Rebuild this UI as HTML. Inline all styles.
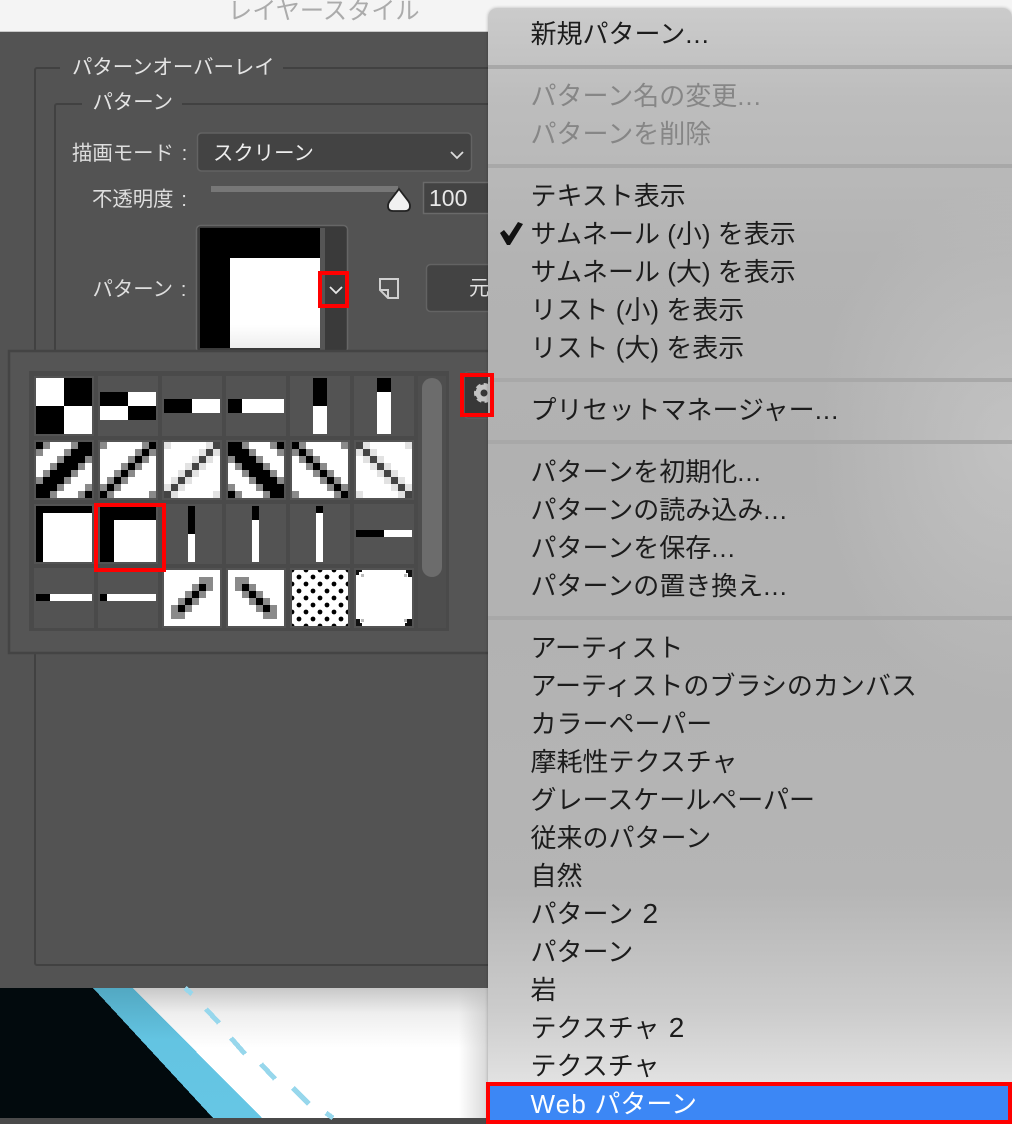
<!DOCTYPE html>
<html lang="ja"><head><meta charset="utf-8"><title>レイヤースタイル</title>
<style>
html,body{margin:0;padding:0;background:#535353}
body{width:1012px;height:1124px;position:relative;overflow:hidden;font-family:"Liberation Sans","Noto Sans CJK JP",sans-serif}
svg{position:absolute;left:0;top:0}
.t{position:absolute;white-space:nowrap;line-height:38px;height:38px;color:#dedede;font-size:20.4px}
.m{font-size:26px;color:#1c1c1c;left:530.5px;margin-top:1px}
.d{color:#868686}
.e{letter-spacing:1px}
.n{font-size:28px;margin-left:2px}
#menu{position:absolute;left:488px;top:8px;width:524px;height:1116px;border-radius:9px 9px 0 0;
background:radial-gradient(ellipse 200px 260px at 100% 39%,rgba(205,205,205,.6),rgba(205,205,205,0)),linear-gradient(180deg,#cbcbcb 0,#bdbdbd 90px,#b3b3b3 250px,#b1b1b1 450px,#b3b3b3 700px,#b5b5b5 880px,#cbcbcb 1000px,#e2e2e2 1075px);box-shadow:0 0 3px rgba(0,0,0,.25)}
.s{position:absolute;left:488px;width:524px;height:4px;background:#a8a8a8}
</style></head><body>
<div style="position:absolute;left:0;top:0;width:1012px;height:32px;background:#f4f4f4;border-bottom:1px solid #c8c8c8;box-sizing:border-box"></div>
<div class="t" style="left:228px;top:-7px;font-size:24.200px;color:#ababab">レイヤースタイル</div>
<div style="position:absolute;left:0;top:988px;width:488px;height:130px;background:linear-gradient(90deg,rgba(255,255,255,0) 94%,rgba(190,190,190,.6) 100%),linear-gradient(180deg,#c8c8c8 0,#eeeeee 25px,#fff 60px)"></div>
<div style="position:absolute;left:0;top:1118px;width:488px;height:6px;background:#4a4a4a"></div>
<svg width="1012" height="1124" viewBox="0 0 1012 1124">
<defs>
<linearGradient id="bl" x1="0" y1="988" x2="0" y2="1118" gradientUnits="userSpaceOnUse"><stop offset="0" stop-color="#52a8c2"/><stop offset=".4" stop-color="#63c4e2"/><stop offset="1" stop-color="#66c6e4"/></linearGradient>
<linearGradient id="sw" x1="0" y1="325" x2="0" y2="348" gradientUnits="userSpaceOnUse"><stop offset="0" stop-color="#fff"/><stop offset="1" stop-color="#eeeeee"/></linearGradient>
<path id="ka" d="M0 0h1v1h-1zM6 0h2v1h-2zM5 1h3v1h-3zM4 2h3v1h-3zM3 3h3v1h-3zM2 4h3v1h-3zM1 5h3v1h-3zM0 6h3v1h-3zM0 7h2v1h-2zM7 7h1v1h-1z"/>
<path id="ga" d="M1 0h1v1h-1zM5 0h1v1h-1zM0 1h1v1h-1zM4 1h1v1h-1zM3 2h1v1h-1zM7 2h1v1h-1zM2 3h1v1h-1zM6 3h1v1h-1zM1 4h1v1h-1zM5 4h1v1h-1zM0 5h1v1h-1zM4 5h1v1h-1zM3 6h1v1h-1zM7 6h1v1h-1zM2 7h1v1h-1zM6 7h1v1h-1z"/>
<path id="kb" d="M7 0h1v1h-1zM6 1h1v1h-1zM5 2h1v1h-1zM4 3h1v1h-1zM3 4h1v1h-1zM2 5h1v1h-1zM1 6h1v1h-1zM0 7h1v1h-1z"/>
<path id="gb" d="M0 0h1v1h-1zM6 0h1v1h-1zM5 1h1v1h-1zM7 1h1v1h-1zM4 2h1v1h-1zM6 2h1v1h-1zM3 3h1v1h-1zM5 3h1v1h-1zM2 4h1v1h-1zM4 4h1v1h-1zM1 5h1v1h-1zM3 5h1v1h-1zM0 6h1v1h-1zM2 6h1v1h-1zM1 7h1v1h-1zM7 7h1v1h-1z"/>
<path id="kc" d="M5 2h1v1h-1zM4 3h1v1h-1zM3 4h1v1h-1zM2 5h1v1h-1z"/>
<path id="gc" d="M5 1h2v1h-2zM4 2h1v1h-1zM6 2h1v1h-1zM3 3h1v1h-1zM5 3h1v1h-1zM2 4h1v1h-1zM4 4h1v1h-1zM1 5h1v1h-1zM3 5h1v1h-1zM1 6h2v1h-2z"/>
<pattern id="dots" x="292" y="570" width="14" height="14" patternUnits="userSpaceOnUse">
<rect width="14" height="14" fill="#fff"/><circle cx="0" cy="0" r="2.400"/><circle cx="14" cy="0" r="2.400"/><circle cx="0" cy="14" r="2.400"/><circle cx="14" cy="14" r="2.400"/><circle cx="7" cy="7" r="2.400"/>
</pattern>
</defs>
<!-- group boxes -->
<g fill="none" stroke="#414141" stroke-width="2">
<path d="M60 68H37a2 2 0 0 0-2 2V963a2 2 0 0 0 2 2H488M283 68H488"/>
<path d="M82 104H57a2 2 0 0 0-2 2V360M182 104H488"/>
</g>
<!-- dropdown -->
<rect x="197.500" y="133" width="274" height="38" rx="4" fill="#434343" stroke="#636363" stroke-width="1.500"/>
<path d="M451 152l6 6 6-6" fill="none" stroke="#dcdcdc" stroke-width="1.800"/>
<!-- slider -->
<rect x="211" y="186" width="187" height="6" fill="#777"/>
<path d="M399 189L407.500 200Q410 203 410 206Q410 211 405 211H393Q388 211 388 206Q388 203 390.500 200Z" fill="#f1f1f1" stroke="#222" stroke-width="1.800"/>
<rect x="423.500" y="182.500" width="70" height="31" fill="#434343" stroke="#6a6a6a" stroke-width="1.500"/>
<!-- swatch -->
<rect x="196.500" y="225.500" width="151" height="127" rx="4" fill="#3a3a3a" stroke="#666" stroke-width="1.500"/>
<rect x="200" y="228" width="120" height="120" fill="#000"/>
<rect x="230" y="258" width="90" height="90" fill="url(#sw)"/>
<rect x="320" y="228" width="5" height="122" fill="#555"/>
<path d="M330 287l6 6 6-6" fill="none" stroke="#e8e8e8" stroke-width="1.800"/>
<path d="M380 279H398V298H388L380 290ZM380 290H388V298" fill="none" stroke="#d0d0d0" stroke-width="2"/>
<rect x="426.500" y="264.500" width="70" height="47" rx="4" fill="#434343" stroke="#636363" stroke-width="1.500"/>
<!-- popup -->
<rect x="9" y="351" width="490" height="302" fill="#555" stroke="#444" stroke-width="2.500"/>
<rect x="29" y="371" width="420" height="260" fill="#4a4a4a"/>
<rect x="418" y="376" width="28" height="252" fill="#4e4e4e"/>
<rect x="422" y="378" width="20" height="199" rx="10" fill="#6c6c6c"/>
<g fill="#535353">
<rect x="34" y="376" width="60" height="60"/><rect x="98" y="376" width="60" height="60"/><rect x="162" y="376" width="60" height="60"/><rect x="226" y="376" width="60" height="60"/><rect x="290" y="376" width="60" height="60"/><rect x="354" y="376" width="60" height="60"/>
<rect x="34" y="440" width="60" height="60"/><rect x="98" y="440" width="60" height="60"/><rect x="162" y="440" width="60" height="60"/><rect x="226" y="440" width="60" height="60"/><rect x="290" y="440" width="60" height="60"/><rect x="354" y="440" width="60" height="60"/>
<rect x="34" y="504" width="60" height="60"/><rect x="98" y="504" width="60" height="60"/><rect x="162" y="504" width="60" height="60"/><rect x="226" y="504" width="60" height="60"/><rect x="290" y="504" width="60" height="60"/><rect x="354" y="504" width="60" height="60"/>
<rect x="34" y="568" width="60" height="60"/><rect x="98" y="568" width="60" height="60"/><rect x="162" y="568" width="60" height="60"/><rect x="226" y="568" width="60" height="60"/><rect x="290" y="568" width="60" height="60"/><rect x="354" y="568" width="60" height="60"/>
</g>
<g shape-rendering="crispEdges">
<!-- row 1 -->
<rect x="36" y="378" width="56" height="56" fill="#fff"/><rect x="64" y="378" width="28" height="28"/><rect x="36" y="406" width="28" height="28"/>
<rect x="100" y="392" width="56" height="28" fill="#fff"/><rect x="100" y="392" width="28" height="14"/><rect x="128" y="406" width="28" height="14"/>
<rect x="164" y="399" width="56" height="14" fill="#fff"/><rect x="164" y="399" width="28" height="14"/>
<rect x="228" y="399" width="56" height="14" fill="#fff"/><rect x="228" y="399" width="14" height="14"/>
<rect x="313" y="378" width="14" height="56" fill="#fff"/><rect x="313" y="378" width="14" height="28"/>
<rect x="377" y="378" width="14" height="56" fill="#fff"/><rect x="377" y="378" width="14" height="14"/>
<!-- row 2 -->
<g transform="translate(36 442) scale(7)"><rect width="8" height="8" fill="#fff"/><use href="#ga" fill="#8a8a8a"/><use href="#ka"/></g>
<g transform="translate(100 442) scale(7)"><rect width="8" height="8" fill="#fff"/><use href="#gb" fill="#8a8a8a"/><use href="#kb"/></g>
<g transform="translate(164 442) scale(7)"><rect width="8" height="8" fill="#fff"/><use href="#gb" fill="#e2e2e2"/><use href="#kb" fill="#444"/></g>
<g transform="translate(284 442) scale(-7 7)"><rect width="8" height="8" fill="#fff"/><use href="#ga" fill="#8a8a8a"/><use href="#ka"/></g>
<g transform="translate(348 442) scale(-7 7)"><rect width="8" height="8" fill="#fff"/><use href="#gb" fill="#8a8a8a"/><use href="#kb"/></g>
<g transform="translate(412 442) scale(-7 7)"><rect width="8" height="8" fill="#fff"/><use href="#gb" fill="#e2e2e2"/><use href="#kb" fill="#444"/></g>
<!-- row 3 -->
<rect x="36" y="506" width="56" height="56"/><rect x="43" y="513" width="49" height="49" fill="#fff"/>
<rect x="100" y="506" width="56" height="56"/><rect x="114" y="520" width="42" height="42" fill="#fff"/>
<rect x="188" y="506" width="7" height="56" fill="#fff"/><rect x="188" y="506" width="7" height="28"/>
<rect x="252" y="506" width="7" height="56" fill="#fff"/><rect x="252" y="506" width="7" height="14"/>
<rect x="316" y="506" width="7" height="56" fill="#fff"/><rect x="316" y="506" width="7" height="7"/>
<rect x="356" y="530" width="56" height="7" fill="#fff"/><rect x="356" y="530" width="28" height="7"/>
<!-- row 4 -->
<rect x="36" y="594" width="56" height="7" fill="#fff"/><rect x="36" y="594" width="14" height="7"/>
<rect x="100" y="594" width="56" height="7" fill="#fff"/><rect x="100" y="594" width="7" height="7"/>
<g transform="translate(164 570) scale(7)"><rect width="8" height="8" fill="#fff"/><use href="#gc" fill="#8a8a8a"/><use href="#kc"/></g>
<g transform="translate(284 570) scale(-7 7)"><rect width="8" height="8" fill="#fff"/><use href="#gc" fill="#8a8a8a"/><use href="#kc"/></g>
</g>
<rect x="292" y="570" width="56" height="56" fill="url(#dots)"/>
<rect x="356" y="570" width="56" height="56" fill="#fff"/>
<path d="M356 570h6v2h-3v3h-3zM412 570h-6v3h2v4h4zM356 626h6v-3h-2v-4h-4zM412 626h-7v-3h2v-4h5z" fill="#111"/>
<path d="M361 574h3v3h-3zM404 574h3v3h-3zM361 619h3v3h-3zM404 619h3v3h-3z" fill="#bbb"/>
<!-- gear button -->
<rect x="464" y="372" width="34" height="46" rx="4" fill="#383838" stroke="#5e5e5e" stroke-width="1.500"/>
<circle cx="484" cy="393" r="6" fill="none" stroke="#c4c4c4" stroke-width="5"/>
<circle cx="484" cy="393" r="8.500" fill="none" stroke="#c4c4c4" stroke-width="3" stroke-dasharray="4.800 3.100"/>
<!-- photo -->
<g shape-rendering="crispEdges">
<path d="M0 988H93L213 1118H0Z" fill="#020a0d"/>
<path d="M93 988H133L262 1118H213Z" fill="url(#bl)"/>
</g>
<g stroke="#97d7ec" stroke-width="5" fill="none" shape-rendering="crispEdges">
<path d="M185 988L192 994M206 1009L219 1023M231 1038L245 1054M261 1064L275 1079M293 1088L309 1104M326 1113L333 1118"/>
</g>
<!-- red -->
<rect x="320" y="273" width="27" height="33" fill="none" stroke="#f00" stroke-width="4"/>
<rect x="96" y="505" width="68" height="65" fill="none" stroke="#f00" stroke-width="4"/>
</svg>
<div class="t" style="left:72px;top:49px;color:#e4e4e4">パターンオーバーレイ</div>
<div class="t" style="left:92.500px;top:84px;color:#e4e4e4">パターン</div>
<div class="t" style="left:72px;top:135px;word-spacing:2px">描画モード :</div>
<div class="t" style="left:213px;top:135px;color:#eee">スクリーン</div>
<div class="t" style="left:92px;top:181px;word-spacing:2px">不透明度 :</div>
<div class="t" style="left:429px;top:179px;font-size:23px;color:#e8e8e8">100</div>
<div class="t" style="left:92.500px;top:271px;word-spacing:2px">パターン :</div>
<div class="t" style="left:469px;top:270px;color:#e0e0e0">元</div>
<div id="menu"></div>
<div class="s" style="top:65px"></div><div class="s" style="top:164px"></div><div class="s" style="top:378px"></div><div class="s" style="top:440px"></div><div class="s" style="top:616px"></div>
<div class="t m" style="top:14px">新規パターン<span class="e">...</span></div>
<div class="t m d" style="top:76px">パターン名の変更<span class="e">...</span></div>
<div class="t m d" style="top:114px">パターンを削除</div>
<div class="t m" style="top:176px">テキスト表示</div>
<div class="t m" style="top:214px">サムネール (小) を表示</div>
<div class="t m" style="top:252px">サムネール (大) を表示</div>
<div class="t m" style="top:290px">リスト (小) を表示</div>
<div class="t m" style="top:328px">リスト (大) を表示</div>
<div class="t m" style="top:390px">プリセットマネージャー<span class="e">...</span></div>
<div class="t m" style="top:452px">パターンを初期化<span class="e">...</span></div>
<div class="t m" style="top:490px">パターンの読み込み<span class="e">...</span></div>
<div class="t m" style="top:528px">パターンを保存<span class="e">...</span></div>
<div class="t m" style="top:566px">パターンの置き換え<span class="e">...</span></div>
<div class="t m" style="top:628px">アーティスト</div>
<div class="t m" style="top:666px">アーティストのブラシのカンバス</div>
<div class="t m" style="top:704px">カラーペーパー</div>
<div class="t m" style="top:742px">摩耗性テクスチャ</div>
<div class="t m" style="top:780px">グレースケールペーパー</div>
<div class="t m" style="top:818px">従来のパターン</div>
<div class="t m" style="top:856px">自然</div>
<div class="t m" style="top:894px">パターン <span class="n">2</span></div>
<div class="t m" style="top:932px">パターン</div>
<div class="t m" style="top:970px">岩</div>
<div class="t m" style="top:1008px">テクスチャ <span class="n">2</span></div>
<div class="t m" style="top:1046px">テクスチャ</div>
<div style="position:absolute;left:486px;top:1082px;width:526px;height:42px;box-sizing:border-box;background:#3c87f5;border:4px solid #f00"></div>
<div class="t m" style="top:1084px;color:#fff"><span style="letter-spacing:1.200px">Web</span> パターン</div>
<svg width="1012" height="1124" viewBox="0 0 1012 1124" style="pointer-events:none">
<path d="M500 233L504 230L509 236L518 222L523 224L510 245H507Z" fill="#111"/>
<path d="M462 375H492V415H462Z" fill="none" stroke="#f00" stroke-width="4"/>
</svg>
</body></html>
